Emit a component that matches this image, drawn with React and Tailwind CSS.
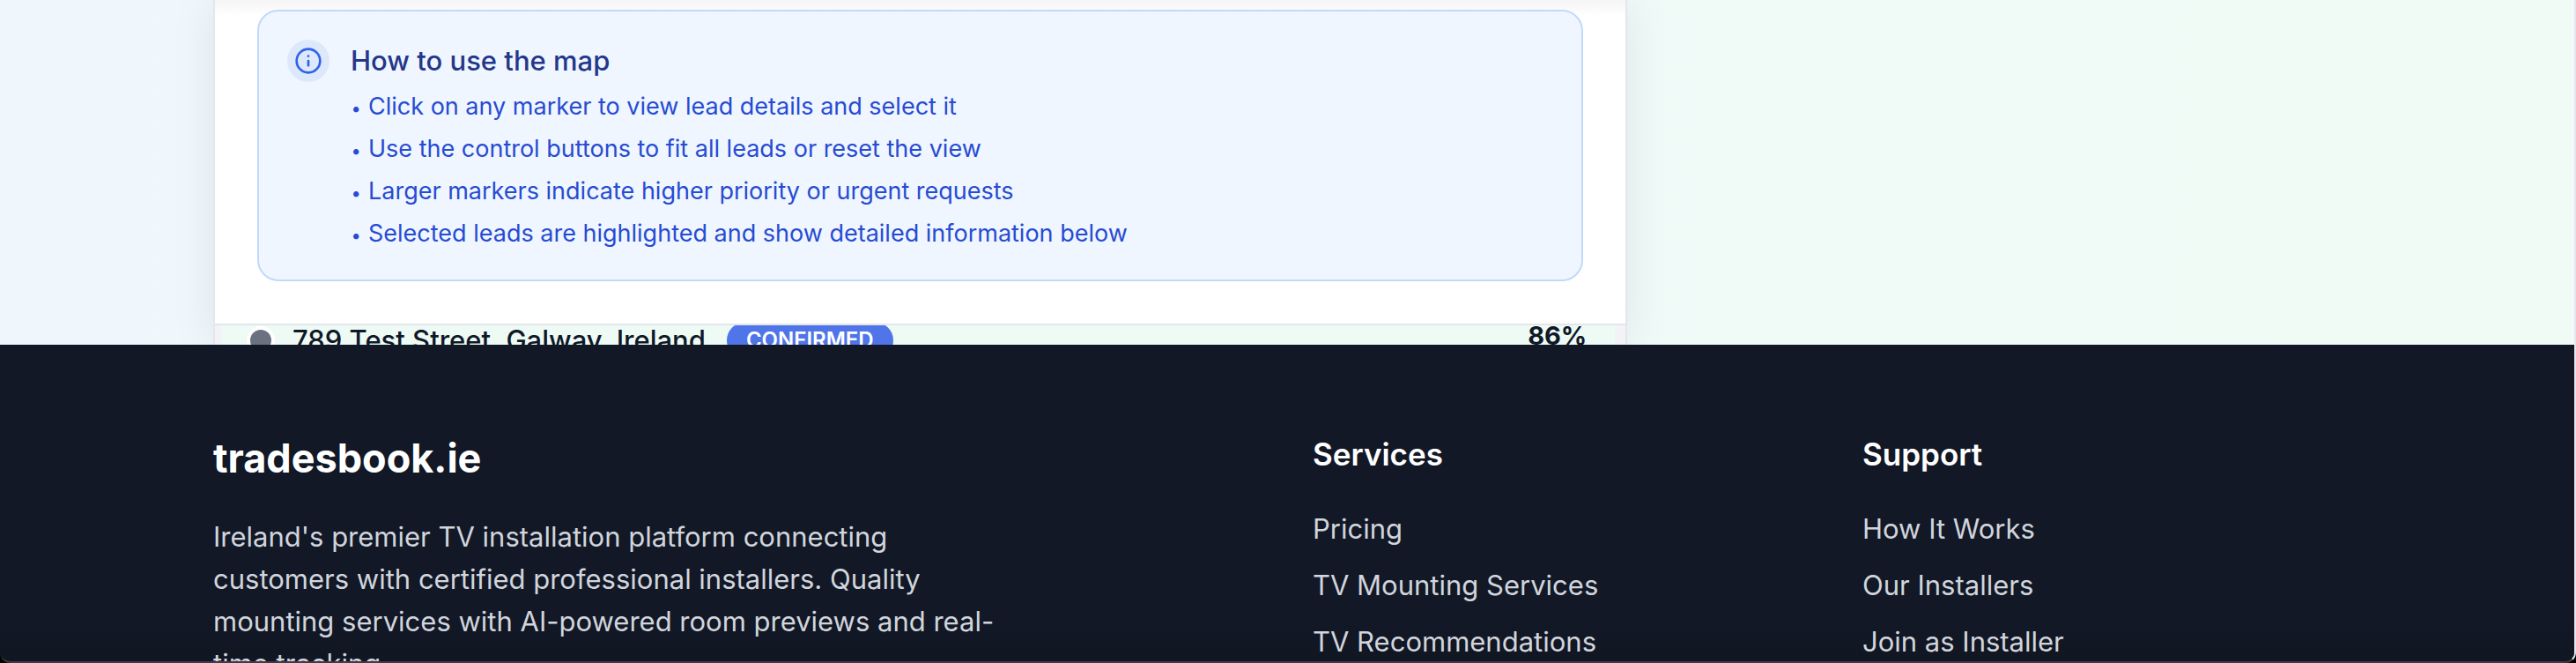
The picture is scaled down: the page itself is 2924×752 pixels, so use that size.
const tips = [
  'Click on any marker to view lead details and select it',
  'Use the control buttons to fit all leads or reset the view',
  'Larger markers indicate higher priority or urgent requests',
  'Selected leads are highlighted and show detailed information below',
];

const footerColumns = [
  { title: 'Services', links: ['Pricing', 'TV Mounting Services', 'TV Recommendations'] },
  { title: 'Support', links: ['How It Works', 'Our Installers', 'Join as Installer'] },
];

function InfoIcon() {
  return (
    <svg className="size-8" viewBox="0 0 24 24" fill="none" stroke="currentColor" strokeWidth="2" strokeLinecap="round" strokeLinejoin="round" aria-hidden="true">
      <circle cx="12" cy="12" r="10" />
      <path d="M12 16v-4" />
      <path d="M12 8h.01" />
    </svg>
  );
}

function MapHelp() {
  return (
    <section className="rounded-3xl border-2 border-[#c0d9fb] bg-[#eff6ff] p-8">
      <div className="flex items-start gap-6">
        <div className="flex size-12 shrink-0 items-center justify-center rounded-full bg-[#dde8fb] text-[#2f62ea]">
          <InfoIcon />
        </div>
        <div>
          <h2 className="text-[31px] leading-12 font-medium text-[#24378a]">How to use the map</h2>
          <ul className="mt-2 flex flex-col gap-2 text-[27px] leading-10 text-[#274bd3]">
            {tips.map((tip) => (
              <li key={tip} className="flex items-baseline gap-2">
                <span className="w-3 text-center text-[20px] leading-5">•</span>
                <span>{tip}</span>
              </li>
            ))}
          </ul>
        </div>
      </div>
    </section>
  );
}

function LeadRow() {
  return (
    <div className="h-[22px] overflow-hidden border-x-2 border-[#e3e6ee] bg-[#f3f3f7] pr-3 pl-2">
      <div className="flex h-[34px] items-center bg-[#edfbf4] pr-8 pl-7">
        <span className="size-8 shrink-0 rounded-full border-4 border-white bg-gray-500" />
        <span className="ml-5 text-[31px] leading-[34px] font-medium text-gray-900">789 Test Street, Galway, Ireland</span>
        <span className="ml-6 rounded-full bg-[#4f75e8] px-[22px] text-[24px] leading-10 font-semibold text-white">CONFIRMED</span>
        <span className="ml-auto self-start text-[29px] leading-6 font-bold text-gray-900">86%</span>
      </div>
    </div>
  );
}

export default function App() {
  return (
    <div className="flex h-screen overflow-hidden bg-black font-['Inter',sans-serif]">
      <div className="flex min-w-0 grow flex-col overflow-hidden rounded-b-xl border-r-2 border-b-2 border-r-[#e6e6ee] border-b-[#3d3c48] bg-gray-900">
        <main className="bg-linear-to-r from-[#eff7fc] via-[#eff9f8] to-[#f1fbf5] pr-[6px]">
          <div className="mx-auto grid max-w-[2560px] grid-cols-3 gap-12 px-16">
            <div className="col-span-2 shadow-[0_0_48px_rgba(0,0,0,0.08)]">
              <div className="border-x-2 border-b-2 border-[#e3e6ee] bg-linear-to-b from-[#f5f5f5] to-white to-5% px-12 pt-[11px] pb-12">
                <MapHelp />
              </div>
              <LeadRow />
            </div>
          </div>
        </main>
        <footer className="grow bg-linear-to-b from-[#121826] from-80% to-[#101520] pr-[6px]">
          <div className="mx-auto grid max-w-[2560px] grid-cols-4 gap-16 px-16 pt-24">
            <div className="col-span-2">
              <p className="text-[45px] leading-[66px] font-bold text-white">tradesbook.ie</p>
              <p className="mt-8 max-w-[896px] text-[31px] leading-12 text-gray-300">
                Ireland's premier TV installation platform connecting customers with certified professional installers. Quality mounting services with AI-powered room previews and real-time tracking.
              </p>
            </div>
            {footerColumns.map((column) => (
              <nav key={column.title} aria-label={column.title}>
                <h3 className="text-[35px] leading-14 font-semibold text-white">{column.title}</h3>
                <ul className="mt-[33px] flex flex-col gap-4 text-[31px] leading-12 text-gray-300">
                  {column.links.map((link) => (
                    <li key={link}>
                      <a href="#">{link}</a>
                    </li>
                  ))}
                </ul>
              </nav>
            ))}
          </div>
        </footer>
      </div>
    </div>
  );
}
